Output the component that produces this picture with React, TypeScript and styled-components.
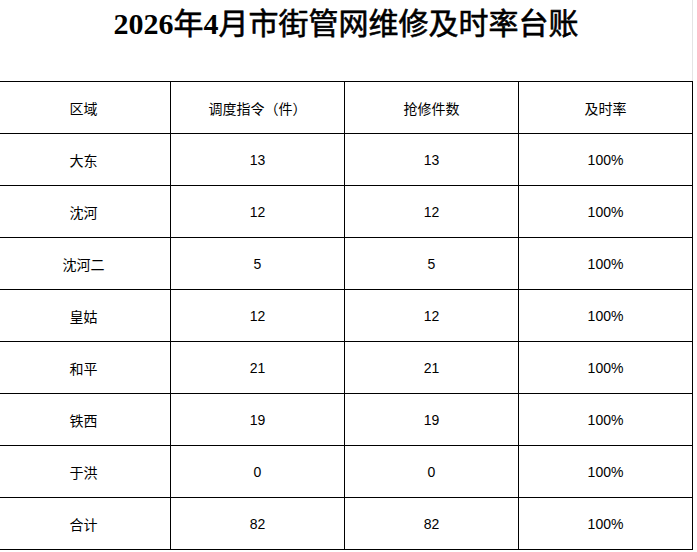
import React from 'react';
import styled, { createGlobalStyle } from 'styled-components';

const rows = [
  { area: '大东', orders: 13, repairs: 13, rate: '100%' },
  { area: '沈河', orders: 12, repairs: 12, rate: '100%' },
  { area: '沈河二', orders: 5, repairs: 5, rate: '100%' },
  { area: '皇姑', orders: 12, repairs: 12, rate: '100%' },
  { area: '和平', orders: 21, repairs: 21, rate: '100%' },
  { area: '铁西', orders: 19, repairs: 19, rate: '100%' },
  { area: '于洪', orders: 0, repairs: 0, rate: '100%' },
  { area: '合计', orders: 82, repairs: 82, rate: '100%' },
];

const headers = ['区域', '调度指令（件）', '抢修件数', '及时率'];

const App = () => {
  return (
    <>
      <GlobalStyle />
      <Sheet>
        <Title>
          <TitleNum>2026</TitleNum>年<TitleNum>4</TitleNum>月市街管网维修及时率台账
        </Title>
        <Ledger>
          {headers.map((h) => (
            <Cell key={h}>{h}</Cell>
          ))}
          {rows.map((r) => (
            <React.Fragment key={r.area}>
              <Cell>{r.area}</Cell>
              <Cell>{r.orders}</Cell>
              <Cell>{r.repairs}</Cell>
              <Cell>{r.rate}</Cell>
            </React.Fragment>
          ))}
        </Ledger>
      </Sheet>
    </>
  );
};

export default App;

const GlobalStyle = createGlobalStyle`
  html, body {
    margin: 0;
    padding: 0;
    background: #ffffff;
    overflow: hidden;
  }
`;

const Sheet = styled.div`
  width: 697px;
  height: 552px;
  overflow: hidden;
  background: #ffffff;
`;

const Title = styled.h1`
  margin: 0;
  height: 81px;
  width: 693px;
  box-sizing: border-box;
  padding: 4px 0 0 0;
  border-right: 1px solid #e4e4e4;
  text-align: center;
  font-family: 'Liberation Serif', 'Noto Sans CJK SC', serif;
  font-weight: normal;
  font-size: 30px;
  line-height: 40px;
  color: #000000;
  -webkit-text-stroke: 0.6px #000000;
`;

const TitleNum = styled.span`
  font-weight: bold;
  -webkit-text-stroke: 0;
`;

const Ledger = styled.div`
  display: grid;
  grid-template-columns: repeat(4, 174px);
  grid-auto-rows: 52px;
  margin-left: -4px;
  width: 697px;
  box-sizing: border-box;
  border-top: 1px solid #000000;
  border-left: 1px solid #000000;
`;

const Cell = styled.div`
  box-sizing: border-box;
  border-right: 1px solid #000000;
  border-bottom: 1px solid #000000;
  display: flex;
  align-items: center;
  justify-content: center;
  font-family: 'Liberation Sans', 'Noto Sans CJK SC', sans-serif;
  font-size: 14px;
  color: #000000;
`;
